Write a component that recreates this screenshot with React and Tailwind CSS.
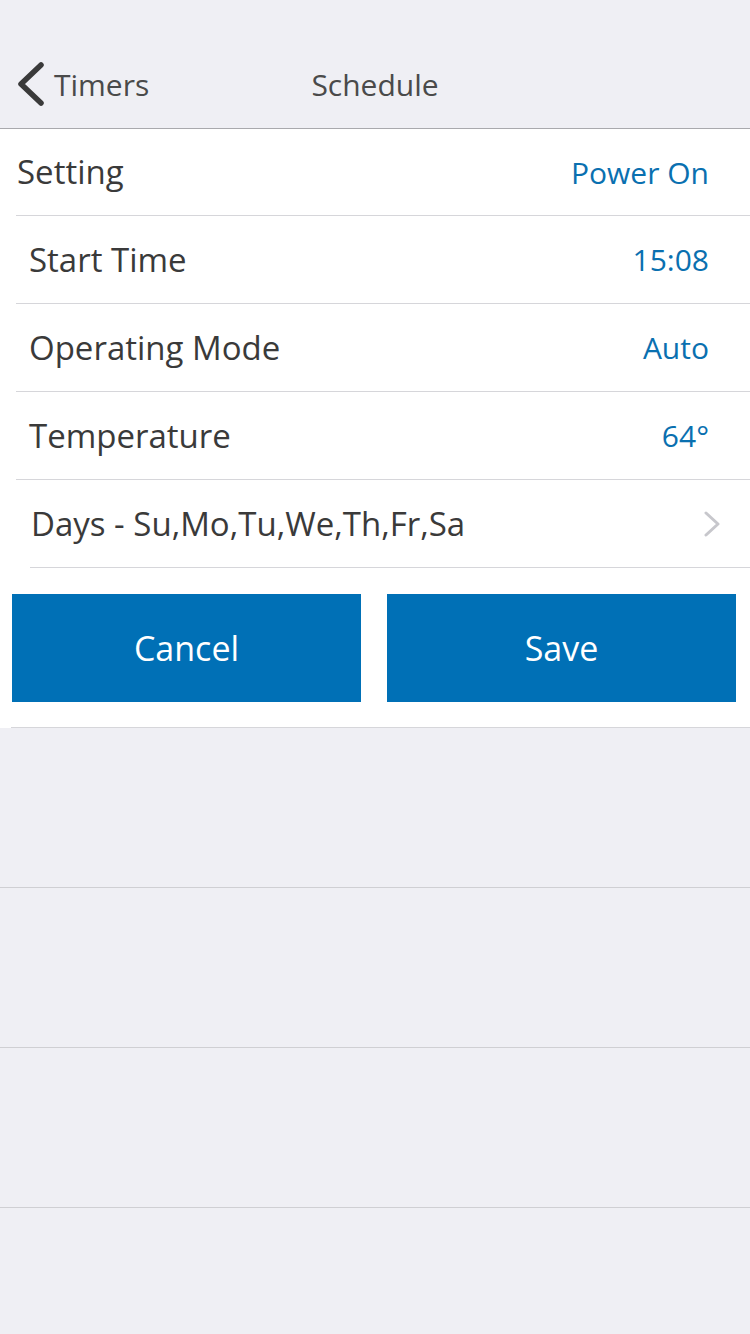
import * as React from "react";

const rows = [
  { label: "Start Time", value: "15:08" },
  { label: "Operating Mode", value: "Auto" },
  { label: "Temperature", value: "64°" },
];

function App() {
  return (
    <div className="min-h-[1334px] bg-[#efeff4] font-['Open_Sans',sans-serif] text-[#3a3a3a]">
      {/* nav bar */}
      <div className="relative flex h-[129px] items-center border-b border-[#a9a9ad] pt-[40px]">
        <div className="flex items-center pl-[16px]">
          <svg width="30" height="44" viewBox="0 0 30 44">
            <path d="M25 3 L5 22 L25 41" fill="none" stroke="#3a3a3a" strokeWidth="5.5" strokeLinecap="round" strokeLinejoin="round" />
          </svg>
          <span className="ml-[8px] text-[30px] text-[#4a4a4a]">Timers</span>
        </div>
        <span className="absolute left-0 right-0 text-center text-[30px] text-[#4a4a4a]">Schedule</span>
      </div>

      {/* settings list */}
      <div className="bg-white">
        <div className="ml-[16px] flex h-[87px] items-center justify-between border-b border-[#d6d6da] pl-[1px] pr-[41px]">
          <span className="text-[33px]">Setting</span>
          <span className="text-[30px] text-[#0a70b0]">Power On</span>
        </div>
        {rows.map((row) => (
          <div key={row.label} className="ml-[16px] flex h-[88px] items-center justify-between border-b border-[#d6d6da] pl-[13px] pr-[41px]">
            <span className="text-[33px]">{row.label}</span>
            <span className="text-[30px] text-[#0a70b0]">{row.value}</span>
          </div>
        ))}
        <div className="ml-[30px] flex h-[88px] items-center justify-between border-b border-[#d6d6da] pl-[1px] pr-[29px]">
          <span className="text-[33px]">Days - Su,Mo,Tu,We,Th,Fr,Sa</span>
          <svg width="18" height="26" viewBox="0 0 18 26">
            <path d="M3 2 L15 13 L3 24" fill="none" stroke="#c7c7cc" strokeWidth="3" strokeLinecap="round" strokeLinejoin="round" />
          </svg>
        </div>
        <div className="flex gap-[26px] pl-[12px] pr-[14px] pt-[26px] pb-[25px]">
          <button className="flex h-[108px] flex-1 items-center justify-center bg-[#0070b6] text-[34px] text-white">Cancel</button>
          <button className="flex h-[108px] flex-1 items-center justify-center bg-[#0070b6] text-[34px] text-white">Save</button>
        </div>
        <div className="ml-[11px] border-b border-[#d6d6da]"></div>
      </div>

      {/* empty rows */}
      <div className="h-[160px] border-b border-[#cfcfd3]"></div>
      <div className="h-[160px] border-b border-[#cfcfd3]"></div>
      <div className="h-[160px] border-b border-[#cfcfd3]"></div>
    </div>
  );
}

export default App;
